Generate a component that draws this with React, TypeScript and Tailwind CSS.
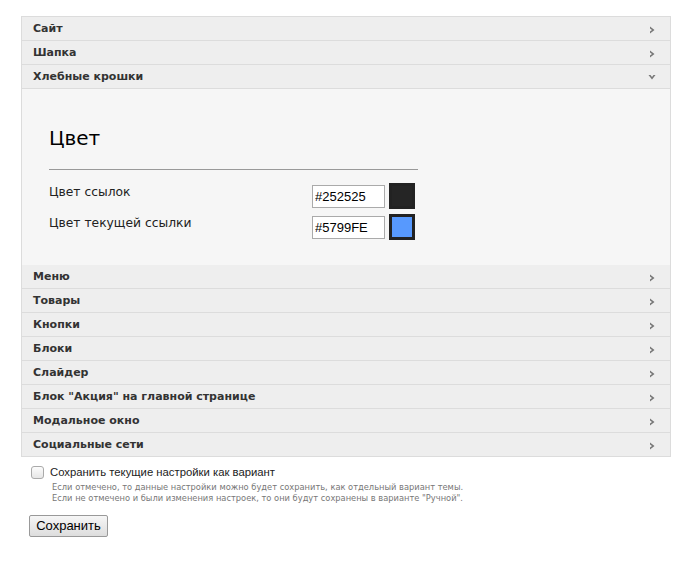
import React from "react";

const Right = () => (
  <svg width="7" height="8" viewBox="0 0 7 8" className="block">
    <path d="M1 0.5 L5.5 4 L1 7.5 L1 5.5 L3 4 L1 2.5 Z" fill="#777" />
  </svg>
);
const Down = () => (
  <svg width="8" height="7" viewBox="0 0 8 7" className="block">
    <path d="M0.5 1 L4 5.5 L7.5 1 L5.5 1 L4 3 L2.5 1 Z" fill="#777" />
  </svg>
);

const Row = ({ title, open }: { title: string; open?: boolean }) => (
  <div className="flex h-6 items-center justify-between border-b border-[#dcdcdc] bg-[#eeeeee] pl-[11px] pr-[14px]">
    <span className="pt-[2px] text-[11px] font-bold text-[#333]">{title}</span>
    <span className="pt-[2px]">{open ? <Down /> : <Right />}</span>
  </div>
);

const ColorRow = ({ label, value, color }: { label: string; value: string; color: string }) => (
  <div className="flex items-start justify-between">
    <span className="mt-[0px] text-[12.3px] text-[#222]">{label}</span>
    <div className="flex items-center gap-[4px]">
      <input
        readOnly
        value={value}
        className="h-[23px] w-[73px] border border-[#aaa] bg-white pl-[2px] text-[13px] text-black outline-none"
        style={{ fontFamily: '"Liberation Sans", Arial, sans-serif' }}
      />
      <div className="h-[26px] w-[26px] border-[3px] border-[#222]" style={{ backgroundColor: color }} />
    </div>
  </div>
);

export default function App() {
  const before = ["Сайт", "Шапка"];
  const after = ["Меню", "Товары", "Кнопки", "Блоки", "Слайдер", 'Блок "Акция" на главной странице', "Модальное окно", "Социальные сети"];
  return (
    <div className="min-h-[562px] bg-white pt-[16px]" style={{ fontFamily: '"DejaVu Sans", Verdana, sans-serif' }}>
      <div className="ml-[21px] w-[650px] border-x border-t border-[#dcdcdc]">
        {before.map((t) => (
          <Row key={t} title={t} />
        ))}
        <Row title="Хлебные крошки" open />
        <div className="h-[176px] bg-[#f6f6f6] pl-[27px] pt-[35px]">
          <div className="w-[369px]">
            <div className="text-[20px] leading-[28px] text-black">Цвет</div>
            <div className="mt-[17px] h-px bg-[#999]" />
            <div className="mt-[13px] flex flex-col gap-[5px] pr-[3px]">
              <ColorRow label="Цвет ссылок" value="#252525" color="#252525" />
              <ColorRow label="Цвет текущей ссылки" value="#5799FE" color="#5799FE" />
            </div>
          </div>
        </div>
        {after.map((t) => (
          <Row key={t} title={t} />
        ))}
      </div>
      <div className="ml-[31px] mt-[7px]">
        <label className="flex items-center gap-[6px]">
          <span className="block h-[13px] w-[13px] rounded-[3px] border border-[#aaa] bg-gradient-to-b from-[#fcfcfc] to-[#e6e6e6]" />
          <span className="text-[11.3px] text-[#222]" style={{ fontFamily: '"Liberation Sans", Arial, sans-serif' }}>
            Сохранить текущие настройки как вариант
          </span>
        </label>
        <div className="ml-[21px] mt-[1px] text-[8.3px] leading-[11px] text-[#777]">
          <div>Если отмечено, то данные настройки можно будет сохранить, как отдельный вариант темы.</div>
          <div>Если не отмечено и были изменения настроек, то они будут сохранены в варианте "Ручной".</div>
        </div>
      </div>
      <button
        className="ml-[29px] mt-[11px] h-[22px] w-[79px] rounded-[2px] border border-[#999] bg-gradient-to-b from-[#f6f6f6] to-[#dddddd] text-[13px] text-black"
        style={{ fontFamily: '"Liberation Sans", Arial, sans-serif' }}
      >
        Сохранить
      </button>
    </div>
  );
}
